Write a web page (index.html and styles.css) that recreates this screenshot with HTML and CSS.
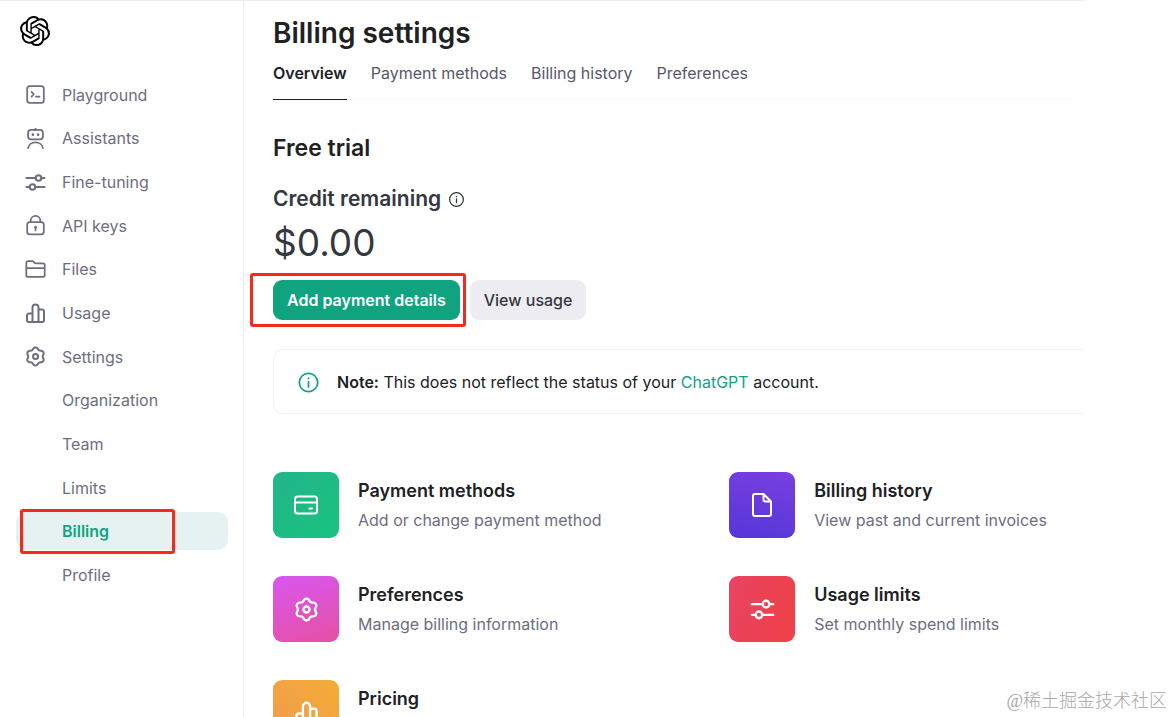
FILE: index.html
```html
<!DOCTYPE html>
<html lang="en">
<head>
<meta charset="utf-8">
<title>Billing settings</title>
<link rel="stylesheet" href="styles.css">
</head>
<body>
<svg class="sprite" aria-hidden="true">
  <symbol id="sliders" viewBox="1.500 1.500 21 21"><path d="M3 7.500h9M18 7.500h3M3 16.500h3M12 16.500h9"/><circle cx="15" cy="7.500" r="2.800"/><circle cx="9" cy="16.500" r="2.800"/></symbol>
  <symbol id="gear" viewBox="1.500 1.500 21 21"><path d="M11.6439 3C10.9352 3 10.2794 3.37508 9.92002 3.98596L9.49644 4.70605C8.96184 5.61487 7.98938 6.17632 6.93501 6.18489L6.09967 6.19168C5.39096 6.19744 4.73823 6.57783 4.38386 7.19161L4.02776 7.80841C3.67339 8.42219 3.67032 9.17767 4.01969 9.7943L4.43151 10.5212C4.95127 11.4386 4.95127 12.5615 4.43151 13.4788L4.01969 14.2057C3.67032 14.8224 3.67339 15.5778 4.02776 16.1916L4.38386 16.8084C4.73823 17.4222 5.39096 17.8026 6.09966 17.8083L6.93502 17.8151C7.98939 17.8237 8.96185 18.3851 9.49645 19.294L9.92002 20.014C10.2794 20.6249 10.9352 21 11.6439 21H12.3561C13.0648 21 13.7206 20.6249 14.08 20.014L14.5035 19.294C15.0381 18.3851 16.0106 17.8237 17.065 17.8151L17.9004 17.8083C18.6091 17.8026 19.2618 17.4222 19.6162 16.8084L19.9723 16.1916C20.3267 15.5778 20.3298 14.8224 19.9804 14.2057L19.5686 13.4788C19.0488 12.5615 19.0488 11.4386 19.5686 10.5212L19.9804 9.7943C20.3298 9.17767 20.3267 8.42219 19.9723 7.80841L19.6162 7.19161C19.2618 6.57783 18.6091 6.19744 17.9004 6.19168L17.065 6.18489C16.0106 6.17632 15.0382 5.61487 14.5036 4.70605L14.08 3.98596C13.7206 3.37508 13.0648 3 12.3561 3Z"/><circle cx="12" cy="12" r="2.500"/></symbol>
  <symbol id="bars" viewBox="1.500 1.500 21 21"><path d="M9 20.500H5.500a2 2 0 0 1-2-2V14a2 2 0 0 1 2-2H9M9 20.500V6a3 3 0 0 1 6 0v14.500M9 20.500h9.500a2 2 0 0 0 2-2V10a2 2 0 0 0-2-2H15"/></symbol>
</svg>
<div class="app">
  <nav class="sidebar" aria-label="Main">
    <a class="logo" href="#" aria-label="Home">
      <svg viewBox="0 0 24 24"><path d="M22.2819 9.8211a5.9847 5.9847 0 0 0-.5157-4.9108 6.0462 6.0462 0 0 0-6.5098-2.9A6.0651 6.0651 0 0 0 4.9807 4.1818a5.9847 5.9847 0 0 0-3.9977 2.9 6.0462 6.0462 0 0 0 .7427 7.0966 5.98 5.98 0 0 0 .511 4.9107 6.051 6.051 0 0 0 6.5146 2.9001A5.9847 5.9847 0 0 0 13.2599 24a6.0557 6.0557 0 0 0 5.7718-4.2058 5.9894 5.9894 0 0 0 3.9977-2.9001 6.0557 6.0557 0 0 0-.7475-7.0729zm-9.022 12.6081a4.4755 4.4755 0 0 1-2.8764-1.0408l.1419-.0804 4.7783-2.7582a.7948.7948 0 0 0 .3927-.6813v-6.7369l2.02 1.1686a.071.071 0 0 1 .038.052v5.5826a4.504 4.504 0 0 1-4.4945 4.4944zm-9.6607-4.1254a4.4708 4.4708 0 0 1-.5346-3.0137l.142.0852 4.783 2.7582a.7712.7712 0 0 0 .7806 0l5.8428-3.3685v2.3324a.0804.0804 0 0 1-.0332.0615L9.74 19.9502a4.4992 4.4992 0 0 1-6.1408-1.6464zM2.3408 7.8956a4.485 4.485 0 0 1 2.3655-1.9728V11.6a.7664.7664 0 0 0 .3879.6765l5.8144 3.3543-2.0201 1.1685a.0757.0757 0 0 1-.071 0l-4.8303-2.7865A4.504 4.504 0 0 1 2.3408 7.872zm16.5963 3.8558L13.1038 8.364 15.1192 7.2a.0757.0757 0 0 1 .071 0l4.8303 2.7913a4.4944 4.4944 0 0 1-.6765 8.1042v-5.6772a.79.79 0 0 0-.407-.667zm2.0107-3.0231l-.142-.0852-4.7735-2.7818a.7759.7759 0 0 0-.7854 0L9.409 9.2297V6.8974a.0662.0662 0 0 1 .0284-.0615l4.8303-2.7866a4.4992 4.4992 0 0 1 6.6802 4.66zM8.3065 12.863l-2.02-1.1638a.0804.0804 0 0 1-.038-.0567V6.0742a4.4992 4.4992 0 0 1 7.3757-3.4537l-.142.0805L8.704 5.459a.7948.7948 0 0 0-.3927.6813zm1.0976-2.3654l2.602-1.4998 2.6069 1.4998v2.9994l-2.5974 1.4997-2.6067-1.4997Z"/></svg>
    </a>
    <ul class="menu">
      <li><a href="#"><svg class="icon" viewBox="0 0 24 24"><rect x="2.500" y="2.500" width="19" height="19" rx="3"/><path d="M7.500 9l2.500 2.700-2.500 2.700M12.500 14.500h4"/></svg>Playground</a></li>
      <li><a href="#"><svg class="icon" viewBox="0 0 24 24"><path d="M12 .500v2M3.500 23c.600-4 4.300-6.500 8.500-6.500s7.900 2.500 8.500 6.500"/><rect x="3.500" y="2" width="17" height="11" rx="3.500"/><path class="dots" d="M9 7.600v.010M15 7.600v.010"/></svg>Assistants</a></li>
      <li><a href="#"><svg class="icon"><use href="#sliders"/></svg>Fine-tuning</a></li>
      <li><a href="#"><svg class="icon" viewBox="0 0 24 24"><rect x="2.500" y="8" width="19" height="14" rx="3"/><path d="M6.500 8V6.500a5.500 5.500 0 0 1 11 0V8M12 15v2.500"/><circle class="solid" cx="12" cy="14" r="1.200"/></svg>API keys</a></li>
      <li><a href="#"><svg class="icon" viewBox="0 0 24 24"><path d="M1.500 18.500v-14a2 2 0 0 1 2-2h4.700c.700 0 1.300.300 1.700.800l.700.900c.400.500 1 .800 1.700.800h8.200a2 2 0 0 1 2 2v11.500a2 2 0 0 1-2 2h-17a2 2 0 0 1-2-2zM1.500 10.500h21"/></svg>Files</a></li>
      <li><a href="#"><svg class="icon"><use href="#bars"/></svg>Usage</a></li>
      <li><a href="#"><svg class="icon"><use href="#gear"/></svg>Settings</a></li>
      <li><a class="sub" href="#">Organization</a></li>
      <li><a class="sub" href="#">Team</a></li>
      <li><a class="sub" href="#">Limits</a></li>
      <li><a class="sub active" href="#" aria-current="page">Billing</a></li>
      <li><a class="sub" href="#">Profile</a></li>
    </ul>
  </nav>
  <main class="content">
    <h1>Billing settings</h1>
    <div class="tabs">
      <a class="tab current" href="#">Overview</a>
      <a class="tab" href="#">Payment methods</a>
      <a class="tab" href="#">Billing history</a>
      <a class="tab" href="#">Preferences</a>
    </div>
    <h2>Free trial</h2>
    <h3>Credit remaining <svg class="info" viewBox="0 0 24 24"><circle cx="12" cy="12" r="11"/><path d="M12 11v6M12 7v.500"/></svg></h3>
    <p class="amount">$0.00</p>
    <div class="actions">
      <button class="btn primary" type="button">Add payment details</button>
      <button class="btn" type="button">View usage</button>
    </div>
    <div class="note">
      <svg viewBox="0 0 24 24"><circle cx="12" cy="12" r="10.500"/><path d="M12 11v6M12 7v.500"/></svg>
      <p><strong>Note:</strong> This does not reflect the status of your <a href="#">ChatGPT</a> account.</p>
    </div>
    <div class="cards">
      <a class="card" href="#"><span class="tile green"><svg viewBox="0 0 24 24"><rect x="1" y="3.500" width="22" height="17" rx="2.500"/><path d="M1 9.500h22M15.500 15.500h2.500"/></svg></span><span class="text"><strong>Payment methods</strong><span>Add or change payment method</span></span></a>
      <a class="card" href="#"><span class="tile purple"><svg viewBox="0 0 24 24"><path d="M13.500 1H5a2 2 0 0 0-2 2v18a2 2 0 0 0 2 2h14a2 2 0 0 0 2-2V8.500zM13.500 1v5.500a2 2 0 0 0 2 2H21"/></svg></span><span class="text"><strong>Billing history</strong><span>View past and current invoices</span></span></a>
      <a class="card" href="#"><span class="tile pink"><svg class="large"><use href="#gear"/></svg></span><span class="text"><strong>Preferences</strong><span>Manage billing information</span></span></a>
      <a class="card" href="#"><span class="tile red"><svg class="large"><use href="#sliders"/></svg></span><span class="text"><strong>Usage limits</strong><span>Set monthly spend limits</span></span></a>
      <a class="card" href="#"><span class="tile orange"><svg class="large"><use href="#bars"/></svg></span><span class="text"><strong>Pricing</strong></span></a>
    </div>
  </main>
</div>
<div class="watermark">@稀土掘金技术社区</div>
</body>
</html>
```
FILE: styles.css
```css
* { box-sizing: border-box; }
body {
  margin: 0;
  height: 100vh;
  overflow: hidden;
  background: #fff;
  color: #202123;
  font: 16px/24px Inter, "Liberation Sans", sans-serif;
}
h1, h2, h3, p, ul { margin: 0; padding: 0; }
h1, h2, h3 { font-weight: 600; }
a { color: inherit; text-decoration: none; }
svg { fill: none; stroke: currentColor; stroke-width: 2; stroke-linecap: round; stroke-linejoin: round; flex: none; }
.sprite { position: absolute; width: 0; height: 0; }

.app {
  display: flex;
  height: 100%;
  margin-right: 90px;
  border-top: 1px solid #ececec;
  overflow: hidden;
}
.sidebar { flex: 0 0 244px; padding: 15px 15px 0 16px; border-right: 1px solid #ececf1; }
.logo { display: block; padding-left: 4px; height: 57px; color: #000; }
.logo svg { width: 30px; height: 30px; fill: currentColor; stroke: none; }
.menu { list-style: none; display: grid; grid-auto-rows: 1fr; height: 524px; color: #6e6e80; }
.menu li { display: flex; align-items: center; }
.menu a { position: relative; display: flex; align-items: center; gap: 16px; width: 100%; height: 38px; padding-left: 9px; border-radius: 10px; }
.menu .sub { padding-left: 46px; }
.menu .active { background: #e6f2f1; color: #10a37f; font-weight: 600; }
.icon { width: 21px; height: 21px; }
.solid { fill: currentColor; stroke-width: 1; }
.dots { stroke-width: 3; }

/* Highlight frames */
.active::after, .primary::after {
  content: "";
  position: absolute;
  border: 3px solid #f5291c;
  border-radius: 3px;
}
.active::after { inset: -3px 53px -4px 4px; }
.primary::after { inset: -7px -6px -7px -23px; }

.content { flex: 1; min-width: 0; padding: 14px 0 0 29px; }
h1 { font-size: 28px; line-height: 36px; }
.tabs { display: flex; gap: 24px; margin-right: 9px; padding-top: 10px; border-bottom: 1px solid #fafafa; color: #565869; }
.tab { padding-bottom: 14px; margin-bottom: -1px; }
.tab.current { color: #202123; font-weight: 600; border-bottom: 1px solid #202123; }
h2 { margin-top: 32px; font-size: 23px; line-height: 32px; }
h3 { display: flex; align-items: center; gap: 8px; margin-top: 21px; font-size: 21px; line-height: 28px; color: #353740; }
.info { width: 15px; height: 15px; }
.amount { margin-top: 8px; font-size: 37px; line-height: 44px; color: #353740; }
.actions { display: flex; gap: 10px; margin-top: 15px; }
.btn { position: relative; height: 40px; padding: 0 14px; border: 0; border-radius: 9px; background: #ececf1; color: #353740; font: inherit; font-weight: 500; }
.primary { background: #10a37f; color: #fff; font-weight: 600; }
.note { display: flex; align-items: center; gap: 18px; margin-top: 29px; padding: 20px 24px 19px; border: 1px solid #f2f2f4; border-right: 0; border-radius: 10px 0 0 10px; }
.note svg { width: 21px; height: 21px; color: #10a37f; }
.note a { color: #10a37f; }
.note strong { font-weight: 600; }
.cards { display: grid; grid-template-columns: 9fr 7fr; row-gap: 38px; margin-top: 58px; }
.card { display: flex; gap: 19px; }
.tile { display: grid; place-items: center; width: 66px; height: 66px; border-radius: 9px; color: #fff; }
.tile svg { width: 24px; height: 24px; }
.tile .large { width: 25px; height: 25px; }
.green { background: linear-gradient(135deg, #22b48c, #19c37d); }
.purple { background: linear-gradient(15deg, #5436da, #7a3fdf); }
.pink { background: linear-gradient(165deg, #d957f0, #e550a4); }
.red { background: linear-gradient(105deg, #ea4364, #ef4146); }
.orange { background: linear-gradient(45deg, #f09a50, #f4ac36); }
.text { display: flex; flex-direction: column; gap: 5px; padding-top: 7px; color: #6e6e80; }
.text strong { font-size: 18px; font-weight: 600; color: #202123; }

.watermark {
  position: absolute;
  right: 7px;
  bottom: 4px;
  color: #a8a8a8;
  font: 18px/24px "Liberation Serif", "Noto Sans CJK SC", serif;
  font-weight: 300;
}
```
